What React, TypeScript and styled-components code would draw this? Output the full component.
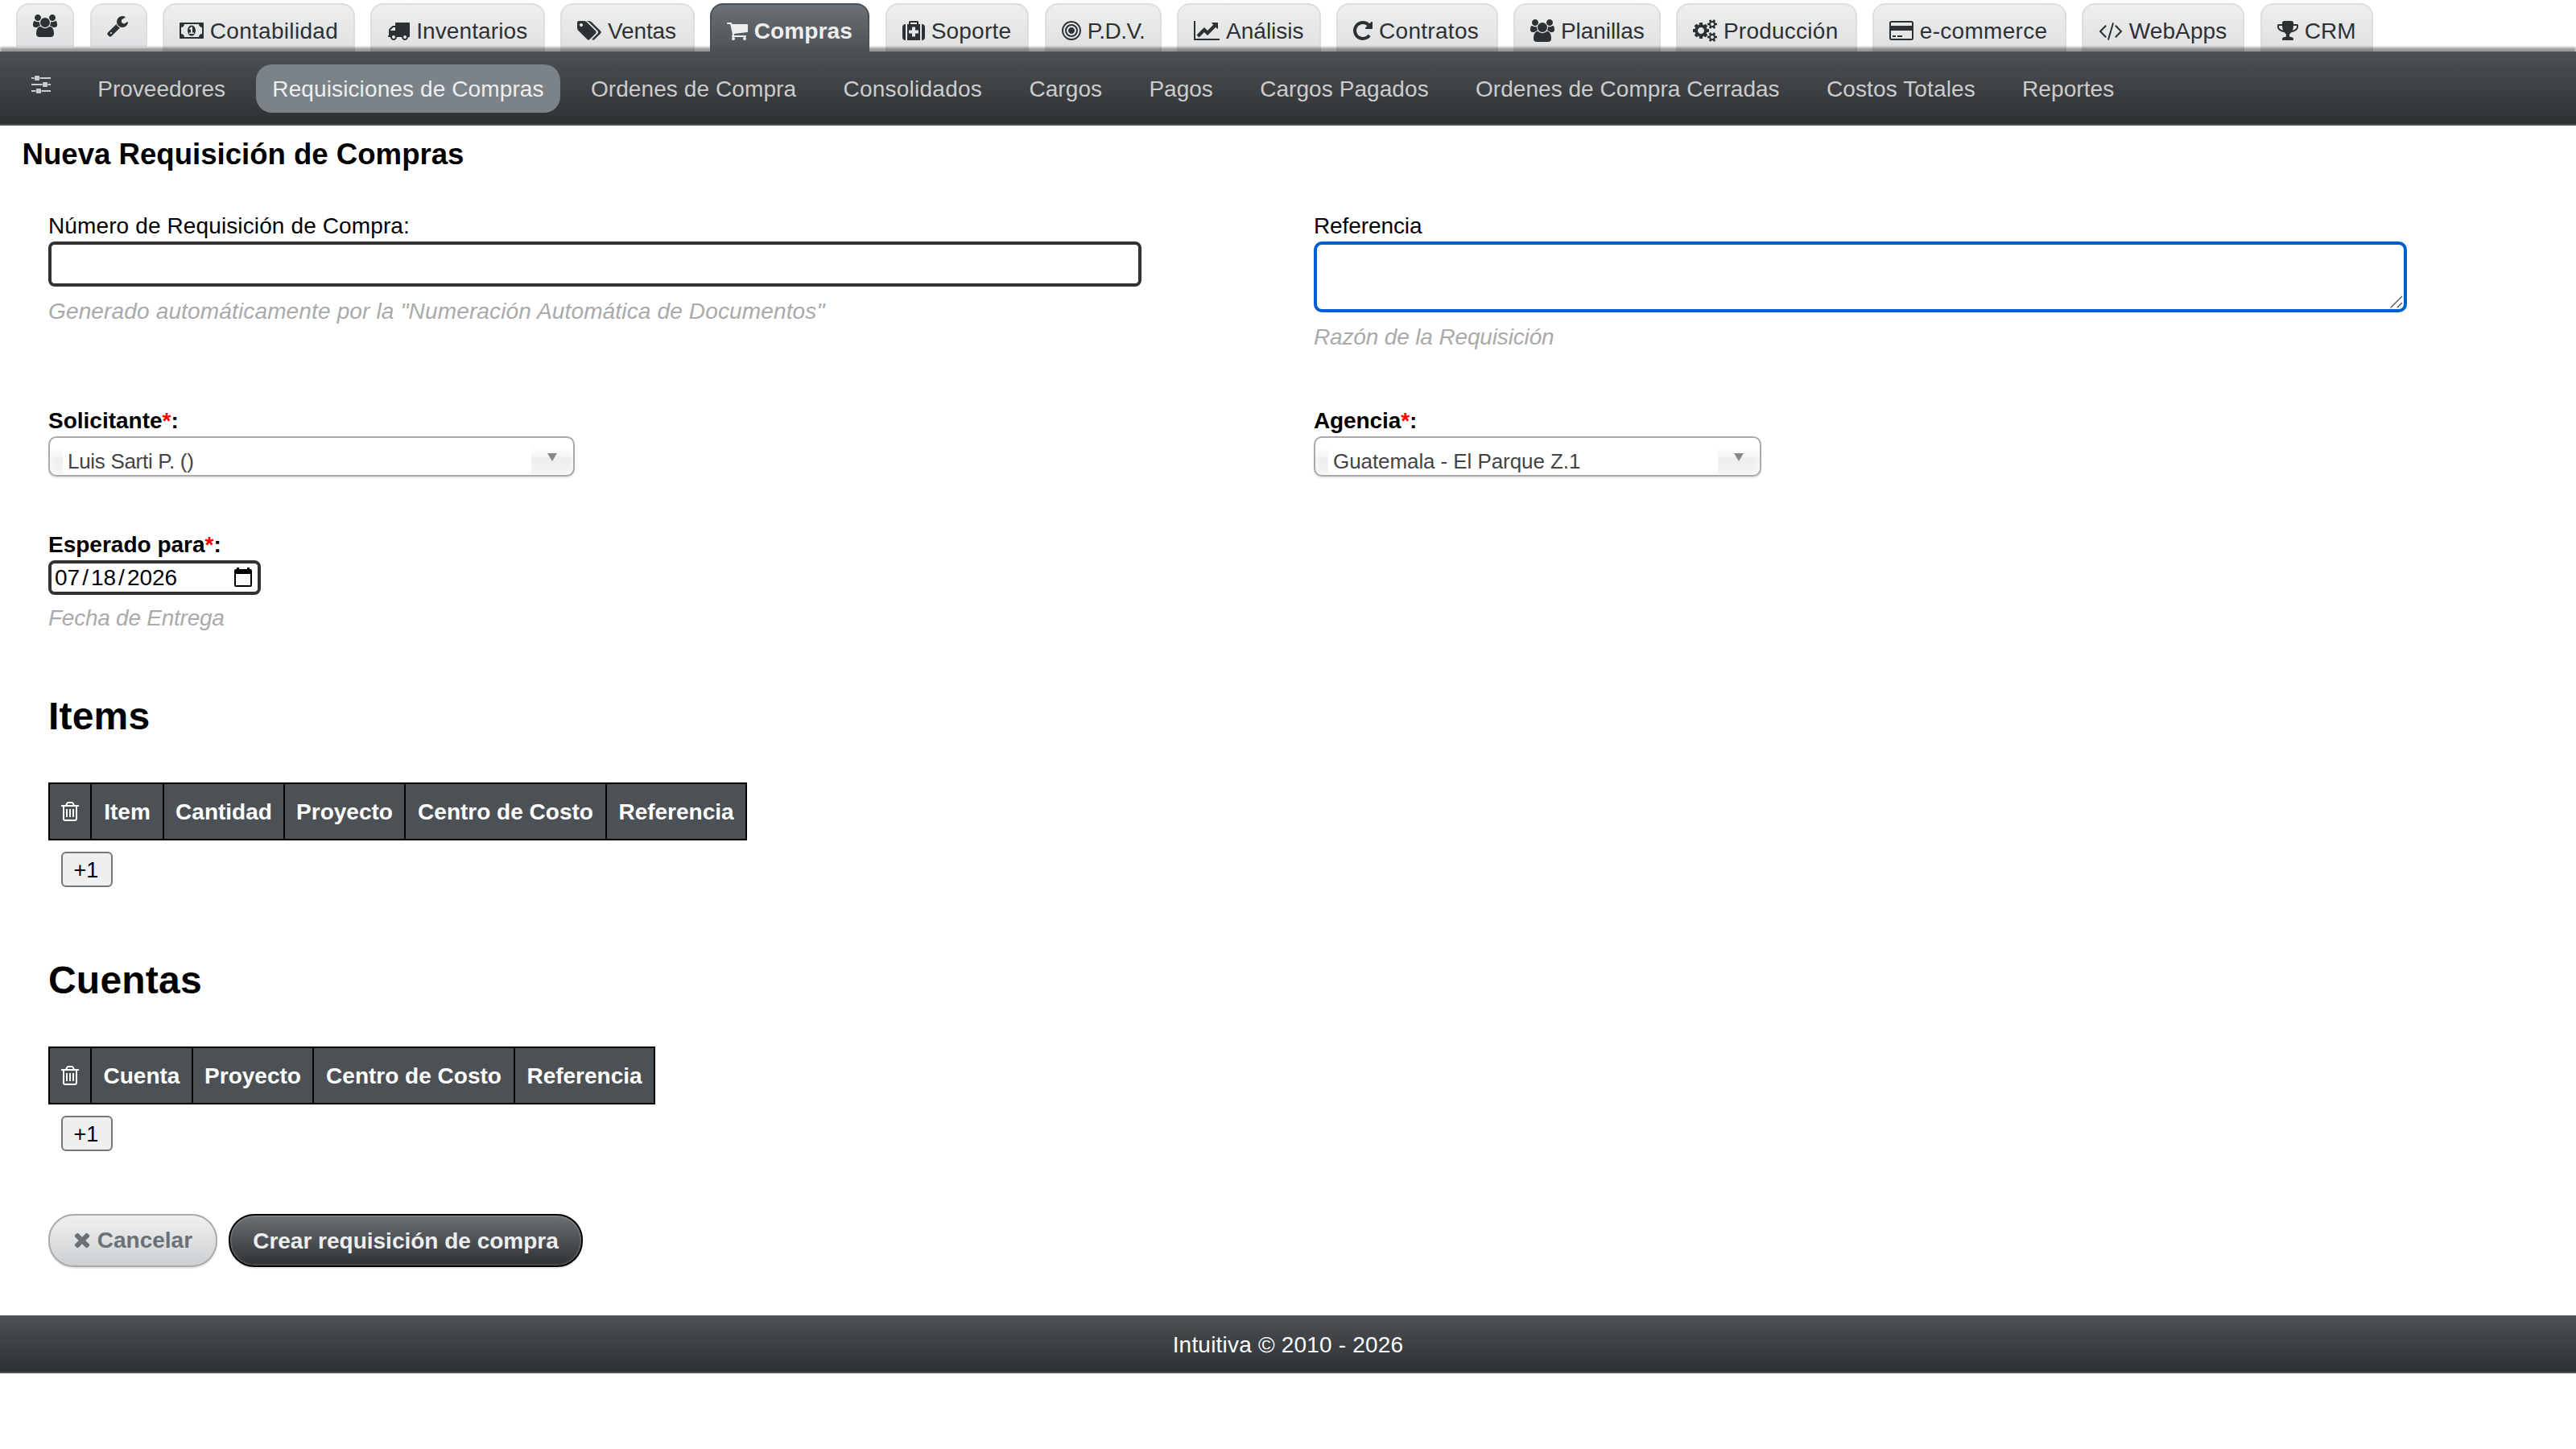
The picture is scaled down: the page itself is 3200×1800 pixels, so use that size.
import styled, { createGlobalStyle, css } from 'styled-components';

type IconShape = { x?: number; w: number; d: string };

const icons: Record<string, IconShape> = {
  users: {
    w: 1920,
    d: 'M593 896q-162 5-265 128h-134q-82 0-138-40.5t-56-118.5q0-353 124-353 6 0 43.5 21t97.5 42.5 119 21.5q67 0 133-23-5 37-5 66 0 139 81 256zm1071 637q0 120-73 189.5t-194 69.5h-874q-121 0-194-69.5t-73-189.5q0-53 3.5-103.5t14-109 26.5-108.5 43-97.5 62-81 85.5-53.5 111.5-20q10 0 43 21.5t73 48 107 48 135 21.5 135-21.5 107-48 73-48 43-21.5q61 0 111.5 20t85.5 53.5 62 81 43 97.5 26.5 108.5 14 109 3.5 103.5zm-1024-1277q0 106-75 181t-181 75-181-75-75-181 75-181 181-75 181 75 75 181zm704 384q0 159-112.5 271.5t-271.5 112.5-271.5-112.5-112.5-271.5 112.5-271.5 271.5-112.5 271.5 112.5 112.5 271.5zm576 225q0 78-56 118.5t-138 40.5h-134q-103-123-265-128 81-117 81-256 0-29-5-66 66 23 133 23 59 0 119-21.5t97.5-42.5 43.5-21q124 0 124 353zm-128-609q0 106-75 181t-181 75-181-75-75-181 75-181 181-75 181 75 75 181z',
  },
  wrench: {
    x: 64,
    w: 1664,
    d: 'M448 1472q0-26-19-45t-45-19-45 19-19 45 19 45 45 19 45-19 19-45zm644-420l-682 682q-37 37-90 37-52 0-91-37l-106-108q-38-36-38-90 0-53 38-91l681-681q39 98 114.5 173.5t173.5 114.5zm634-435q0 39-23 106-47 134-164.5 217.5t-258.5 83.5q-185 0-316.5-131.5t-131.5-316.5 131.5-316.5 316.5-131.5q58 0 121.5 16.5t107.5 46.5q16 11 16 28t-16 28l-293 169v224l193 107q5-3 79-48.5t135.5-81 70.5-35.5q15 0 23.5 10t8.5 25z',
  },
  money: {
    w: 1920,
    d: 'M768 1152h384v-96h-128v-448h-114l-148 137 77 80q42-37 55-57h2v288h-128v96zm512-256q0 70-21 142t-59.5 134-101.5 101-138 39-138-39-101.5-101-59.5-134-21-142 21-142 59.5-134 101.5-101 138-39 138 39 101.5 101 59.5 134 21 142zm512 256v-512q-106 0-181-75t-75-181h-1152q0 106-75 181t-181 75v512q106 0 181 75t75 181h1152q0-106 75-181t181-75zm128-832v1152q0 26-19 45t-45 19h-1792q-26 0-45-19t-19-45v-1152q0-26 19-45t45-19h1792q26 0 45 19t19 45z',
  },
  truck: {
    w: 1792,
    d: 'M640 1408q0-52-38-90t-90-38-90 38-38 90 38 90 90 38 90-38 38-90zm-384-512h384v-256h-158q-13 0-22 9l-195 195q-9 9-9 22v30zm1280 512q0-52-38-90t-90-38-90 38-38 90 38 90 90 38 90-38 38-90zm256-1088v1024q0 15-4 26.5t-13.5 18.5-16.5 11.5-23.5 6-22.5 2-25.5 0-22.5-.5q0 106-75 181t-181 75-181-75-75-181h-384q0 106-75 181t-181 75-181-75-75-181h-64q-3 0-22.5.5t-25.5 0-22.5-2-23.5-6-16.5-11.5-13.5-18.5-4-26.5q0-26 19-45t45-19v-320q0-8-.5-35t0-38 2.5-34.5 6.5-37 14-30.5 22.5-30l198-198q19-19 50.5-32t58.5-13h160v-192q0-26 19-45t45-19h1024q26 0 45 19t19 45z',
  },
  tags: {
    w: 1920,
    d: 'M448 448q0-53-37.5-90.5t-90.5-37.5-90.5 37.5-37.5 90.5 37.5 90.5 90.5 37.5 90.5-37.5 37.5-90.5zm1067 576q0 53-37 90l-491 492q-39 37-91 37-53 0-90-37l-715-716q-38-37-64.5-101t-26.5-117v-416q0-52 38-90t90-38h416q53 0 117 26.5t102 64.5l715 714q37 39 37 91zm384 0q0 53-37 90l-491 492q-39 37-91 37-36 0-59-14t-53-45l470-470q37-37 37-90 0-52-37-91l-715-714q-38-38-102-64.5t-117-26.5h224q53 0 117 26.5t102 64.5l715 714q37 39 37 91z',
  },
  cart: {
    x: 64,
    w: 1664,
    d: 'M704 1536q0 52-38 90t-90 38-90-38-38-90 38-90 90-38 90 38 38 90zm896 0q0 52-38 90t-90 38-90-38-38-90 38-90 90-38 90 38 38 90zm128-1088v512q0 24-16.5 42.5t-40.5 21.5l-1044 122q13 60 13 70 0 16-24 64h920q26 0 45 19t19 45-19 45-45 19h-1024q-26 0-45-19t-19-45q0-11 8-31.5t16-36 21.5-40 15.5-29.5l-177-823h-204q-26 0-45-19t-19-45 19-45 45-19h256q16 0 28.5 6.5t19.5 15.5 13 24.5 8 26 5.5 29.5 4.5 26h1201q26 0 45 19t19 45z',
  },
  medkit: {
    w: 1792,
    d: 'M1280 1088v-192q0-14-9-23t-23-9h-224v-224q0-14-9-23t-23-9h-192q-14 0-23 9t-9 23v224h-224q-14 0-23 9t-9 23v192q0 14 9 23t23 9h224v224q0 14 9 23t23 9h192q14 0 23-9t9-23v-224h224q14 0 23-9t9-23zm-640-704h512v-128h-512v128zm-384 0v1280h-32q-92 0-158-66t-66-158v-832q0-92 66-158t158-66h32zm1152 0v1280h-1024v-1280h128v-160q0-40 28-68t68-28h576q40 0 68 28t28 68v160h128zm384 224v832q0 92-66 158t-158 66h-32v-1280h32q92 0 158 66t66 158z',
  },
  bullseye: {
    x: 128,
    w: 1536,
    d: 'M1152 896q0 106-75 181t-181 75-181-75-75-181 75-181 181-75 181 75 75 181zm128 0q0-159-112.5-271.5t-271.5-112.5-271.5 112.5-112.5 271.5 112.5 271.5 271.5 112.5 271.5-112.5 112.5-271.5zm128 0q0 212-150 362t-362 150-362-150-150-362 150-362 362-150 362 150 150 362zm128 0q0-130-51-248.5t-136.5-204-204-136.5-248.5-51-248.5 51-204 136.5-136.5 204-51 248.5 51 248.5 136.5 204 204 136.5 248.5 51 248.5-51 204-136.5 136.5-204 51-248.5zm128 0q0 209-103 385.5t-279.5 279.5-385.5 103-385.5-103-279.5-279.5-103-385.5 103-385.5 279.5-279.5 385.5-103 385.5 103 279.5 279.5 103 385.5z',
  },
  chart: {
    w: 2048,
    d: 'M2048 1536v128h-2048v-1536h128v1408h1920zm-128-1248v435q0 21-19.5 29.5t-35.5-7.5l-121-121-633 633q-10 10-23 10t-23-10l-233-233-416 416-192-192 585-585q10-10 23-10t23 10l233 233 464-464-121-121q-16-16-7.5-35.5t29.5-19.5h435q14 0 23 9t9 23z',
  },
  repeat: {
    x: 128,
    w: 1536,
    d: 'M1664 256v448q0 26-19 45t-45 19h-448q-42 0-59-40-17-39 14-69l138-138q-148-137-349-137-104 0-198.5 40.5t-163.5 109.5-109.5 163.5-40.5 198.5 40.5 198.5 109.5 163.5 163.5 109.5 198.5 40.5q119 0 225-52t179-147q7-10 23-12 15 0 25 9l137 138q9 8 9.5 20.5t-7.5 22.5q-109 132-264 204.5t-327 72.5q-156 0-298-61t-245-164-164-245-61-298 61-298 164-245 245-164 298-61q147 0 284.5 55.5t244.5 156.5l130-129q29-31 70-14 39 17 39 59z',
  },
  cogs: {
    w: 1920,
    d: 'M896 896q0-106-75-181t-181-75-181 75-75 181 75 181 181 75 181-75 75-181zm768 512q0-52-38-90t-90-38-90 38-38 90q0 53 37.5 90.5t90.5 37.5 90.5-37.5 37.5-90.5zm0-1024q0-52-38-90t-90-38-90 38-38 90q0 53 37.5 90.5t90.5 37.5 90.5-37.5 37.5-90.5zm-384 421v185q0 10-7 19.5t-16 10.5l-155 24q-11 35-32 76 34 48 90 115 7 11 7 20 0 12-7 19-23 30-82.5 89.5t-78.5 59.5q-11 0-21-7l-115-90q-37 19-77 31-11 108-23 155-7 24-30 24h-186q-11 0-20-7.5t-10-17.5l-23-153q-34-10-75-31l-118 89q-7 7-20 7-11 0-21-8-144-133-144-160 0-9 7-19 10-14 41-53t47-61q-23-44-35-82l-152-24q-10-1-17-9.5t-7-19.5v-185q0-10 7-19.5t16-10.5l155-24q11-35 32-76-34-48-90-115-7-11-7-20 0-12 7-20 22-30 82-89t79-59q11 0 21 7l115 90q34-18 77-32 11-108 23-154 7-24 30-24h186q11 0 20 7.5t10 17.5l23 153q34 10 75 31l118-89q8-7 20-7 11 0 21 8 144 133 144 160 0 8-7 19-12 16-42 54t-45 60q23 48 34 82l152 23q10 2 17 10.5t7 19.5zm640 533v140q0 16-149 31-12 27-30 52 51 113 51 138 0 4-4 7-122 71-124 71-8 0-46-47t-52-68q-20 2-30 2t-30-2q-14 21-52 68t-46 47q-2 0-124-71-4-3-4-7 0-25 51-138-18-25-30-52-149-15-149-31v-140q0-16 149-31 13-29 30-52-51-113-51-138 0-4 4-7 4-2 35-20t59-34 30-16q8 0 46 46.5t52 67.5q20-2 30-2t30 2q51-71 92-112l6-2q4 0 124 70 4 3 4 7 0 25-51 138 17 23 30 52 149 15 149 31zm0-1024v140q0 16-149 31-12 27-30 52 51 113 51 138 0 4-4 7-122 71-124 71-8 0-46-47t-52-68q-20 2-30 2t-30-2q-14 21-52 68t-46 47q-2 0-124-71-4-3-4-7 0-25 51-138-18-25-30-52-149-15-149-31v-140q0-16 149-31 13-29 30-52-51-113-51-138 0-4 4-7 4-2 35-20t59-34 30-16q8 0 46 46.5t52 67.5q20-2 30-2t30 2q51-71 92-112l6-2q4 0 124 70 4 3 4 7 0 25-51 138 17 23 30 52 149 15 149 31z',
  },
  card: {
    w: 1920,
    d: 'M1760 128q66 0 113 47t47 113v1216q0 66-47 113t-113 47h-1600q-66 0-113-47t-47-113v-1216q0-66 47-113t113-47h1600zm-1600 128q-13 0-22.5 9.5t-9.5 22.5v224h1664v-224q0-13-9.5-22.5t-22.5-9.5h-1600zm1600 1280q13 0 22.5-9.5t9.5-22.5v-608h-1664v608q0 13 9.5 22.5t22.5 9.5h1600zm-1504-128v-128h256v128h-256zm384 0v-128h384v128h-384z',
  },
  code: {
    w: 1920,
    d: 'M617 1399l-50 50q-10 10-23 10t-23-10l-466-466q-10-10-10-23t10-23l466-466q10-10 23-10t23 10l50 50q10 10 10 23t-10 23l-393 393 393 393q10 10 10 23t-10 23zm591-1067l-373 1291q-4 13-15.5 19.5t-23.5 2.5l-62-17q-13-4-19.5-15.5t-2.5-24.5l373-1291q4-13 15.5-19.5t23.5-2.5l62 17q13 4 19.5 15.5t2.5 24.5zm657 651l-466 466q-10 10-23 10t-23-10l-50-50q-10-10-10-23t10-23l393-393-393-393q-10-10-10-23t10-23l50-50q10-10 23-10t23 10l466 466q10 10 10 23t-10 23z',
  },
  trophy: {
    x: 64,
    w: 1664,
    d: 'M522 883q-74-162-74-371h-256v96q0 78 94.5 162t235.5 113zm1078-275v-96h-256q0 209-74 371 141-29 235.5-113t94.5-162zm128-128v128q0 71-41.5 143t-112 130-173 97.5-215.5 44.5q-42 54-95 95-38 34-52.5 72.5t-14.5 89.5q0 54 30.5 91t97.5 37q75 0 133.5 45.5t58.5 114.5v64q0 14-9 23t-23 9h-832q-14 0-23-9t-9-23v-64q0-69 58.5-114.5t133.5-45.5q67 0 97.5-37t30.5-91q0-51-14.5-89.5t-52.5-72.5q-53-41-95-95-113-5-215.5-44.5t-173-97.5-112-130-41.5-143v-128q0-40 28-68t68-28h288v-96q0-66 47-113t113-47h576q66 0 113 47t47 113v96h288q40 0 68 28t28 68z',
  },
  sliders: {
    x: 128,
    w: 1536,
    d: 'M480 1408v128h-352v-128h352zm352-128q26 0 45 19t19 45v256q0 26-19 45t-45 19h-256q-26 0-45-19t-19-45v-256q0-26 19-45t45-19h256zm160-384v128h-864v-128h864zm-640-512v128h-224v-128h224zm1312 1024v128h-736v-128h736zm-960-1152q26 0 45 19t19 45v256q0 26-19 45t-45 19h-256q-26 0-45-19t-19-45v-256q0-26 19-45t45-19h256zm640 512q26 0 45 19t19 45v256q0 26-19 45t-45 19h-256q-26 0-45-19t-19-45v-256q0-26 19-45t45-19h256zm320 128v128h-224v-128h224zm0-512v128h-864v-128h864z',
  },
  trash: {
    x: 192,
    w: 1408,
    d: 'M704 736v576q0 14-9 23t-23 9h-64q-14 0-23-9t-9-23v-576q0-14 9-23t23-9h64q14 0 23 9t9 23zm256 0v576q0 14-9 23t-23 9h-64q-14 0-23-9t-9-23v-576q0-14 9-23t23-9h64q14 0 23 9t9 23zm256 0v576q0 14-9 23t-23 9h-64q-14 0-23-9t-9-23v-576q0-14 9-23t23-9h64q14 0 23 9t9 23zm128 724v-948h-896v948q0 22 7 40.5t14.5 27 10.5 8.5h832q3 0 10.5-8.5t14.5-27 7-40.5zm-672-1076h448l-48-117q-7-9-17-11h-317q-10 2-17 11zm928 32v64q0 14-9 23t-23 9h-96v948q0 83-47 143.5t-113 60.5h-832q-66 0-113-58.5t-47-141.5v-952h-96q-14 0-23-9t-9-23v-64q0-14 9-23t23-9h309l70-167q15-37 54-63t79-26h320q40 0 79 26t54 63l70 167h309q14 0 23 9t9 23z',
  },
  times: {
    x: 192,
    w: 1408,
    d: 'M1490 1322q0 40-28 68l-136 136q-28 28-68 28t-68-28l-294-294-294 294q-28 28-68 28t-68-28l-136-136q-28-28-28-68t28-68l294-294-294-294q-28-28-28-68t28-68l136-136q28-28 68-28t68 28l294 294 294-294q28-28 68-28t68 28l136 136q28 28 28 68t-28 68l-294 294 294 294q28 28 28 68z',
  },
};

const Icon = ({ name }: { name: string }) => {
  const { x = 0, w, d } = icons[name];
  return (
    <Glyph viewBox={`${x} 0 ${w} 1792`} width={(w * 28) / 1792} height={28}>
      <path d={d} />
    </Glyph>
  );
};

const tabs = [
  { icon: 'users', width: 72.3 },
  { icon: 'wrench', width: 70.6 },
  { icon: 'money', label: 'Contabilidad', width: 239, spacing: 0.3 },
  { icon: 'truck', label: 'Inventarios', width: 216.3, spacing: 0.1 },
  { icon: 'tags', label: 'Ventas', width: 166.4, spacing: -0.1 },
  { icon: 'cart', label: 'Compras', width: 198.5, spacing: 0.1, active: true },
  { icon: 'medkit', label: 'Soporte', width: 178.5, spacing: 0.2 },
  { icon: 'bullseye', label: 'P.D.V.', width: 145, spacing: -0.5 },
  { icon: 'chart', label: 'Análisis', width: 178.5, spacing: 0 },
  { icon: 'repeat', label: 'Contratos', width: 200.5, spacing: 0.3 },
  { icon: 'users', label: 'Planillas', width: 182.5, spacing: -0.05 },
  { icon: 'cogs', label: 'Producción', width: 224.5, spacing: 0.25 },
  { icon: 'card', label: 'e-commerce', width: 240.5, spacing: 0.3 },
  { icon: 'code', label: 'WebApps', width: 202.5, spacing: 0.1 },
  { icon: 'trophy', label: 'CRM', width: 140, spacing: 0 },
];

const links = [
  { label: 'Proveedores', spacing: 0 },
  { label: 'Requisiciones de Compras', spacing: 0.11, active: true },
  { label: 'Ordenes de Compra', spacing: 0.09 },
  { label: 'Consolidados', spacing: 0.25 },
  { label: 'Cargos', spacing: 0.08 },
  { label: 'Pagos', spacing: 0 },
  { label: 'Cargos Pagados', spacing: 0.07 },
  { label: 'Ordenes de Compra Cerradas', spacing: 0.04 },
  { label: 'Costos Totales', spacing: 0.12 },
  { label: 'Reportes', spacing: 0.06 },
];

const itemColumns = [
  { label: 'Item', width: 90 },
  { label: 'Cantidad', width: 150 },
  { label: 'Proyecto', width: 150 },
  { label: 'Centro de Costo', width: 250 },
  { label: 'Referencia', width: 174 },
];

const accountColumns = [
  { label: 'Cuenta', width: 126 },
  { label: 'Proyecto', width: 150 },
  { label: 'Centro de Costo', width: 250 },
  { label: 'Referencia', width: 174 },
];

const LineTable = ({ title, columns }: { title: string; columns: typeof itemColumns }) => (
  <Section>
    <SectionTitle>{title}</SectionTitle>
    <HeaderRow>
      <HeaderCell $width={52}>
        <Icon name="trash" />
      </HeaderCell>
      {columns.map((column) => (
        <HeaderCell key={column.label} $width={column.width}>
          {column.label}
        </HeaderCell>
      ))}
    </HeaderRow>
    <AddButton type="button">+1</AddButton>
  </Section>
);

const App = () => {
  return (
    <>
      <GlobalStyle />
      <Tabs>
        {tabs.map((tab, i) => (
          <Tab key={i} $width={tab.width} $active={tab.active} $small={!tab.label}>
            <Icon name={tab.icon} />
            {tab.label && <TabLabel $spacing={tab.spacing}>{tab.label}</TabLabel>}
          </Tab>
        ))}
      </Tabs>
      <NavBar>
        <NavIcon>
          <Icon name="sliders" />
        </NavIcon>
        {links.map((link) => (
          <NavLink key={link.label} $active={link.active} $spacing={link.spacing}>
            {link.label}
          </NavLink>
        ))}
      </NavBar>

      <Main>
        <Title>Nueva Requisición de Compras</Title>
        <Form>
          <Grid>
            <Field>
              <Label $spacing={0.12}>Número de Requisición de Compra:</Label>
              <Input />
              <Hint $spacing={0.15}>
                Generado automáticamente por la "Numeración Automática de Documentos"
              </Hint>
            </Field>
            <Field>
              <Label $spacing={-0.1}>Referencia</Label>
              <AreaWrap>
                <TextArea />
                <Grip viewBox="0 0 16 16">
                  <path d="M1 15L15 1M9 15L15 9" />
                </Grip>
              </AreaWrap>
              <Hint $spacing={-0.15}>Razón de la Requisición</Hint>
            </Field>
            <Field>
              <Label $bold>
                Solicitante<Required>*</Required>:
              </Label>
              <Select $width={654}>
                <SelectText $spacing={-0.3}>Luis Sarti P. ()</SelectText>
                <Arrow />
              </Select>
            </Field>
            <Field>
              <Label $bold $spacing={-0.1}>
                Agencia<Required>*</Required>:
              </Label>
              <Select $width={556}>
                <SelectText $spacing={-0.08}>Guatemala - El Parque Z.1</SelectText>
                <Arrow />
              </Select>
            </Field>
            <Field>
              <Label $bold>
                Esperado para<Required>*</Required>:
              </Label>
              <DateBox>
                <span>07</span>
                <Slash>/</Slash>
                <span>18</span>
                <Slash>/</Slash>
                <span>2026</span>
                <Calendar viewBox="0 0 22 24">
                  <path d="M20 2h-1V0h-3v2H6V0H3v2H2a2 2 0 0 0-2 2v18a2 2 0 0 0 2 2h18a2 2 0 0 0 2-2V4a2 2 0 0 0-2-2zm0 20H2V8h18z" />
                </Calendar>
              </DateBox>
              <Hint $top={13} $spacing={-0.25}>
                Fecha de Entrega
              </Hint>
            </Field>
          </Grid>

          <Sections>
            <LineTable title="Items" columns={itemColumns} />
            <LineTable title="Cuentas" columns={accountColumns} />
          </Sections>

          <Actions>
            <CancelButton type="button">
              <Icon name="times" /> Cancelar
            </CancelButton>
            <SubmitButton type="button">Crear requisición de compra</SubmitButton>
          </Actions>
        </Form>
      </Main>
      <Footer>Intuitiva © 2010 - 2026</Footer>
    </>
  );
};

export default App;

// Styles
const GlobalStyle = createGlobalStyle`
  * {
    box-sizing: border-box;
  }

  body {
    margin: 0;
    background: #fff;
    color: #000;
    font-family: 'Liberation Sans', Arial, sans-serif;
    font-size: 28px;
    line-height: 32px;
  }

  input, textarea, button {
    font: inherit;
    outline: none;
  }
`;

const Glyph = styled.svg`
  display: inline-block;
  vertical-align: -4px;
  fill: currentColor;
`;

const Tabs = styled.nav`
  display: flex;
  gap: 19.45px;
  height: 64px;
  padding: 4px 0 0 20.2px;
`;

const Tab = styled.a<{ $width: number; $active?: boolean; $small?: boolean }>`
  flex: none;
  width: ${({ $width }) => $width}px;
  height: 60px;
  padding: 17px 0 0 19px;
  border: 2px solid #dddfdf;
  border-bottom: none;
  border-radius: 16px 16px 0 0;
  background: linear-gradient(#efefef, #e6e8e8 45%, #dfe0e3);
  color: #2e3134;
  white-space: nowrap;

  ${({ $small }) =>
    $small &&
    css`
      height: 54px;
      padding-top: 11px;
    `}

  ${({ $active }) =>
    $active &&
    css`
      position: relative;
      z-index: 1;
      height: 66px;
      border-color: #4c5155;
      background: linear-gradient(#6b7176, #4c5155 90%);
      color: #eee;
      font-weight: bold;
    `}
`;

const TabLabel = styled.span<{ $spacing?: number }>`
  margin-left: 7.8px;
  letter-spacing: ${({ $spacing = 0 }) => $spacing}px;
`;

const NavBar = styled.nav`
  position: relative;
  display: flex;
  align-items: center;
  gap: 18.3px;
  height: 92px;
  padding-left: 19px;
  border-bottom: 2px solid #4c5155;
  background: linear-gradient(#4c5155, #2e3134);
  box-shadow: 0 -5px 3px rgba(0, 0, 0, 0.4);
  color: #ccc;
`;

const NavIcon = styled.a`
  height: 44px;
  margin-top: 4px;
  padding: 0 20px;
`;

const NavLink = styled.a<{ $active?: boolean; $spacing: number }>`
  height: 60px;
  margin-top: 2px;
  padding: 0 20px;
  border-radius: 20px;
  line-height: 62px;
  letter-spacing: ${({ $spacing }) => $spacing}px;
  white-space: nowrap;
  ${({ $active }) =>
    $active &&
    css`
      background: #7b8288;
      color: #eee;
    `}
`;

const Main = styled.main`
  padding-top: 14px;
`;

const Title = styled.h1`
  margin: 0 0 0 27.6px;
  font-size: 36.6px;
  line-height: 44px;
`;

const Form = styled.form`
  padding: 50px 0 60px 60px;
`;

const Grid = styled.div`
  display: grid;
  grid-template-columns: 1572px 1358px;
  grid-template-rows: 242px 154px 124px;
`;

const Field = styled.div`
  display: flex;
  flex-direction: column;
  align-items: flex-start;
`;

const Label = styled.label<{ $bold?: boolean; $spacing?: number }>`
  margin-bottom: 3px;
  padding-top: 1px;
  font-weight: ${({ $bold }) => ($bold ? 'bold' : 'normal')};
  letter-spacing: ${({ $spacing = 0 }) => $spacing}px;
`;

const Required = styled.span`
  color: #f00;
`;

const Input = styled.input`
  width: 1358px;
  height: 56px;
  border: 4px solid #303334;
  border-radius: 8px;
  background: #fff;
`;

const AreaWrap = styled.div`
  position: relative;
  height: 88px;
`;

const TextArea = styled.textarea`
  display: block;
  width: 1358px;
  height: 88px;
  border: 4px solid #0060d0;
  border-radius: 10px;
  background: #fff;
  resize: none;
`;

const Grip = styled.svg`
  position: absolute;
  right: 5px;
  bottom: 5px;
  width: 16px;
  height: 16px;
  stroke: #555;
  stroke-width: 1.4;
`;

const Hint = styled.p<{ $top?: number; $spacing?: number }>`
  margin: ${({ $top = 15 }) => $top}px 0 0;
  color: #aaa;
  font-style: italic;
  letter-spacing: ${({ $spacing = 0 }) => $spacing}px;
`;

const Select = styled.div<{ $width: number }>`
  display: flex;
  width: ${({ $width }) => $width}px;
  height: 50px;
  padding-left: 16px;
  border: 2px solid #aaa;
  border-radius: 10px;
  background: linear-gradient(#fff 20%, #f6f6f6 50%, #eee 52%, #f4f4f4 100%);
  box-shadow:
    inset 0 0 6px #fff,
    0 2px 2px rgba(0, 0, 0, 0.1);
`;

const SelectText = styled.span<{ $spacing: number }>`
  flex: 1;
  padding: 13px 0 0 6px;
  background: #fff;
  color: #444;
  font-size: 26px;
  letter-spacing: ${({ $spacing }) => $spacing}px;
`;

const Arrow = styled.span`
  width: 12px;
  height: 10px;
  margin: 19px 20px 0;
  background: #888;
  clip-path: polygon(0 0, 100% 0, 50% 100%);
`;

const DateBox = styled.div`
  display: flex;
  width: 264px;
  height: 44px;
  padding: 2px 7px 0 4px;
  border: 4px solid #303334;
  border-radius: 8px;
`;

const Slash = styled.span`
  margin: 0 3px;
`;

const Calendar = styled.svg`
  width: 22px;
  height: 24px;
  margin: 3px 0 0 auto;
`;

const Sections = styled.div`
  display: flex;
  flex-direction: column;
  gap: 87px;
  margin-top: 77px;
`;

const Section = styled.section`
  display: flex;
  flex-direction: column;
  align-items: flex-start;
`;

const SectionTitle = styled.h2`
  margin: 0 0 54px;
  padding-top: 1px;
  font-size: 48px;
  line-height: 56px;
  letter-spacing: 0.2px;
`;

const HeaderRow = styled.div`
  display: flex;
  height: 72px;
  border: 2px solid #000;
  border-right: none;
  background: #4c5155;
  color: #fff;
`;

const HeaderCell = styled.div<{ $width: number }>`
  width: ${({ $width }) => $width}px;
  padding-top: 19px;
  border-right: 2px solid #000;
  font-weight: bold;
  text-align: center;
  white-space: nowrap;
`;

const AddButton = styled.button`
  width: 64px;
  height: 44px;
  margin: 14px 0 0 16px;
  padding: 1px 2px 0 0;
  border: 2px solid #767676;
  border-radius: 6px;
  background: #efefef;
  color: #000;
  font-size: 27px;
`;

const Actions = styled.div`
  display: flex;
  gap: 14px;
  margin-top: 78px;
`;

const PillButton = styled.button`
  height: 66px;
  padding: 0;
  border: 2px solid;
  border-radius: 32px;
  font-weight: bold;
  white-space: nowrap;
`;

const CancelButton = styled(PillButton)`
  width: 210px;
  padding-bottom: 1px;
  border-color: #aaa;
  background: linear-gradient(#f0f0f0, #cdd1d4);
  box-shadow: 0 2px 1px rgba(0, 0, 0, 0.1);
  color: #6b7176;
`;

const SubmitButton = styled(PillButton)`
  width: 440px;
  padding-top: 2px;
  border-color: #000;
  background: linear-gradient(#6b7176, #2e3134);
  box-shadow:
    inset 0 0 2px 1px rgba(255, 255, 255, 0.25),
    0 2px 1px rgba(0, 0, 0, 0.1);
  color: #eee;
`;

const Footer = styled.footer`
  height: 72px;
  border-bottom: 2px solid #4c5155;
  background: linear-gradient(#4c5155, #2e3134);
  color: #fff;
  line-height: 73px;
  letter-spacing: 0.2px;
  text-align: center;
`;
